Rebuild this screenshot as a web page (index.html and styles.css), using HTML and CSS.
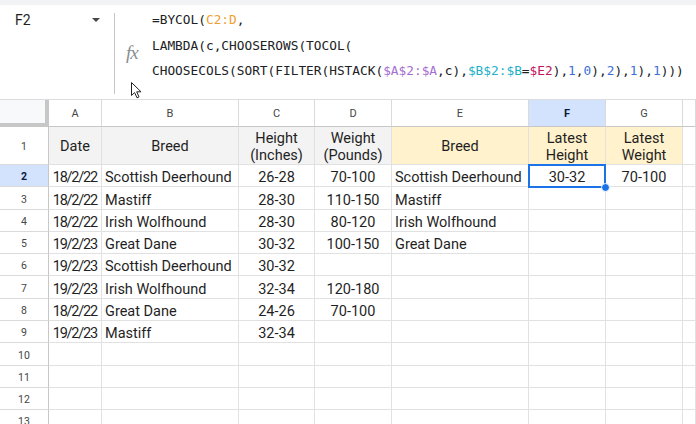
FILE: index.html
```html
<!DOCTYPE html>
<html>
<head>
<meta charset="utf-8">
<link rel="stylesheet" href="styles.css">
</head>
<body>
<div class="topstrip"></div>
<div class="fbar">
  <div class="namebox"><span class="ref">F2</span><span class="caret"></span></div>
  <div class="divider"></div>
  <div class="fx">fx</div>
  <div class="formula">
    <div>=BYCOL(<span class="o">C2:D</span>,</div>
    <div>LAMBDA(c,CHOOSEROWS(TOCOL(</div>
    <div>CHOOSECOLS(SORT(FILTER(HSTACK(<span class="p">$A$2:$A</span>,c),<span class="t">$B$2:$B</span>=<span class="m">$E2</span>),<span class="n">1</span>,<span class="n">0</span>),<span class="n">2</span>),<span class="n">1</span>),<span class="n">1</span>)))</div>
  </div>
  <svg class="cursor" width="14" height="18" viewBox="0 0 14 18"><path d="M1.5 1.5 L1.5 14.5 L4.6 11.6 L7 16.8 L9 15.9 L6.7 10.8 L11 10.8 Z" fill="#fff" stroke="#222" stroke-width="1" stroke-linejoin="round"/></svg>
</div>
<div class="sheet">
  <div class="corner"></div>
  <div class="ch">A</div><div class="ch">B</div><div class="ch">C</div><div class="ch">D</div><div class="ch">E</div><div class="ch sel">F</div><div class="ch">G</div><div class="ch"></div>

  <div class="rh">1</div>
  <div class="c hd g">Date</div><div class="c hd g">Breed</div><div class="c hd g">Height<br>(Inches)</div><div class="c hd g">Weight<br>(Pounds)</div><div class="c hd y">Breed</div><div class="c hd y">Latest<br>Height</div><div class="c hd y">Latest<br>Weight</div><div class="c"></div>

  <div class="rh sel">2</div>
  <div class="c r">18/2/22</div><div class="c">Scottish Deerhound</div><div class="c m">26-28</div><div class="c m">70-100</div><div class="c">Scottish Deerhound</div><div class="c m">30-32</div><div class="c m">70-100</div><div class="c"></div>

  <div class="rh">3</div>
  <div class="c r">18/2/22</div><div class="c">Mastiff</div><div class="c m">28-30</div><div class="c m">110-150</div><div class="c">Mastiff</div><div class="c"></div><div class="c"></div><div class="c"></div>

  <div class="rh">4</div>
  <div class="c r">18/2/22</div><div class="c">Irish Wolfhound</div><div class="c m">28-30</div><div class="c m">80-120</div><div class="c">Irish Wolfhound</div><div class="c"></div><div class="c"></div><div class="c"></div>

  <div class="rh">5</div>
  <div class="c r">19/2/23</div><div class="c">Great Dane</div><div class="c m">30-32</div><div class="c m">100-150</div><div class="c">Great Dane</div><div class="c"></div><div class="c"></div><div class="c"></div>

  <div class="rh">6</div>
  <div class="c r">19/2/23</div><div class="c">Scottish Deerhound</div><div class="c m">30-32</div><div class="c"></div><div class="c"></div><div class="c"></div><div class="c"></div><div class="c"></div>

  <div class="rh">7</div>
  <div class="c r">19/2/23</div><div class="c">Irish Wolfhound</div><div class="c m">32-34</div><div class="c m">120-180</div><div class="c"></div><div class="c"></div><div class="c"></div><div class="c"></div>

  <div class="rh">8</div>
  <div class="c r">18/2/22</div><div class="c">Great Dane</div><div class="c m">24-26</div><div class="c m">70-100</div><div class="c"></div><div class="c"></div><div class="c"></div><div class="c"></div>

  <div class="rh">9</div>
  <div class="c r">19/2/23</div><div class="c">Mastiff</div><div class="c m">32-34</div><div class="c"></div><div class="c"></div><div class="c"></div><div class="c"></div><div class="c"></div>

  <div class="rh">10</div>
  <div class="c"></div><div class="c"></div><div class="c"></div><div class="c"></div><div class="c"></div><div class="c"></div><div class="c"></div><div class="c"></div>

  <div class="rh">11</div>
  <div class="c"></div><div class="c"></div><div class="c"></div><div class="c"></div><div class="c"></div><div class="c"></div><div class="c"></div><div class="c"></div>

  <div class="rh">12</div>
  <div class="c"></div><div class="c"></div><div class="c"></div><div class="c"></div><div class="c"></div><div class="c"></div><div class="c"></div><div class="c"></div>

  <div class="rh">13</div>
  <div class="c"></div><div class="c"></div><div class="c"></div><div class="c"></div><div class="c"></div><div class="c"></div><div class="c"></div><div class="c"></div>

  <div class="selection"><span class="handle"></span></div>
</div>
</body>
</html>
```

FILE: styles.css
```css
* { box-sizing: border-box; }
html, body {
  margin: 0;
  padding: 0;
  width: 696px;
  height: 424px;
  overflow: hidden;
  background: #fff;
  font-family: Roboto, "Liberation Sans", Arial, sans-serif;
  color: #1f1f1f;
}
.topstrip {
  height: 5px;
  background: #f1f3f4;
}
.fbar {
  position: relative;
  display: flex;
  height: 95px;
  border-bottom: 1px solid #dadce0;
}
.namebox {
  width: 114px;
  display: flex;
  align-items: flex-start;
  justify-content: space-between;
  padding: 6px 14px 0 15px;
  font-size: 14px;
  line-height: 18px;
}
.caret {
  margin-top: 7px;
  width: 0;
  height: 0;
  border-left: 4.5px solid transparent;
  border-right: 4.5px solid transparent;
  border-top: 4.5px solid #444746;
}
.divider {
  width: 1px;
  margin: 8px 0 5px;
  background: #c7c7c7;
}
.fx {
  width: 37px;
  padding: 37px 0 0 11px;
  font-family: "Liberation Serif", "DejaVu Serif", serif;
  font-style: italic;
  font-size: 19px;
  line-height: 22px;
  color: #8a8d91;
  letter-spacing: -1px;
}
.formula {
  padding-top: 2px;
  font-family: "DejaVu Sans Mono", "Liberation Mono", monospace;
  font-size: 12.8px;
  line-height: 25.5px;
  color: #202124;
  white-space: nowrap;
}
.formula .o { color: #f0a030; }
.formula .p { color: #a46fd0; }
.formula .t { color: #22b0c8; }
.formula .m { color: #c2185b; }
.formula .n { color: #3d6fd8; }
.cursor {
  position: absolute;
  left: 130px;
  top: 76px;
}
.sheet {
  position: relative;
  display: grid;
  grid-template-columns: 49px 53px 137px 76px 77px 137px 77px 77px 1fr;
  grid-template-rows: 27px 38px 22px 23px 22px 22px 22px 23px 22px 22px 23px 22px 22px 22px;
}
.corner {
  background: #f8f9fa;
  border-right: 4px solid #c7c7c7;
  border-bottom: 4px solid #c7c7c7;
}
.ch {
  display: flex;
  align-items: center;
  justify-content: center;
  font-size: 11px;
  color: #444746;
  border-right: 1px solid #dadada;
  border-bottom: 1px solid #c7c7c7;
}
.ch.sel, .rh.sel {
  background: #d3e3fd;
  color: #0b1d3a;
  font-weight: bold;
}
.rh {
  display: flex;
  align-items: center;
  justify-content: center;
  padding-top: 2px;
  font-size: 10.5px;
  color: #444746;
  border-right: 1px solid #c7c7c7;
  border-bottom: 1px solid #dadada;
}
.c {
  display: flex;
  align-items: center;
  padding: 4px 3px 0;
  font-size: 14.5px;
  white-space: nowrap;
  overflow: hidden;
  border-right: 1px solid #e1e1e1;
  border-bottom: 1px solid #e1e1e1;
}
.c.r {
  justify-content: flex-end;
  letter-spacing: -1.2px;
  padding-right: 4px;
}
.c.m { justify-content: center; }
.c.hd {
  justify-content: center;
  text-align: center;
  line-height: 17px;
  padding-top: 2px;
}
.c.g { background: #f3f3f3; }
.c.y { background: #fff2cc; }
.selection {
  position: absolute;
  left: 528px;
  top: 64px;
  width: 78px;
  height: 24px;
  border: 2px solid #1a73e8;
}
.handle {
  position: absolute;
  right: -6px;
  bottom: -6px;
  width: 9px;
  height: 9px;
  border-radius: 50%;
  background: #1a73e8;
  border: 1px solid #fff;
}
```
